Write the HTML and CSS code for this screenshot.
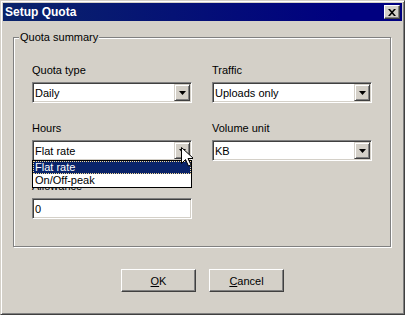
FILE: index.html
```html
<!DOCTYPE html>
<html lang="en">

<head>
    <meta charset="UTF-8">
    <title>Setup Quota</title>
    <link rel="stylesheet" href="styles.css">
</head>

<body>

    <div class="window">
        <div class="titlebar">
            <span class="title">Setup Quota</span>
            <span class="close-btn">
                <svg width="8" height="7" viewBox="0 0 8 7">
                    <path d="M0 0h2l2 2.3 2-2.3h2l-3 3.5 3 3.5h-2l-2-2.3-2 2.3h-2l3-3.5z" fill="#000"/>
                </svg>
            </span>
        </div>

        <div class="dialog-body">
            <div class="groupbox">
                <span class="group-label">Quota summary</span>

                <div class="field-grid">
                    <div class="field">
                        <label>Quota type</label>
                        <div class="combo">
                            <span class="combo-text">Daily</span>
                            <span class="combo-btn"><svg width="7" height="4" viewBox="0 0 7 4"><path d="M0 0h7l-3.5 4z" fill="#000"/></svg></span>
                        </div>
                    </div>

                    <div class="field">
                        <label>Traffic</label>
                        <div class="combo">
                            <span class="combo-text">Uploads only</span>
                            <span class="combo-btn"><svg width="7" height="4" viewBox="0 0 7 4"><path d="M0 0h7l-3.5 4z" fill="#000"/></svg></span>
                        </div>
                    </div>

                    <div class="field">
                        <label>Hours</label>
                        <div class="combo">
                            <span class="combo-text">Flat rate</span>
                            <span class="combo-btn"><svg width="7" height="4" viewBox="0 0 7 4"><path d="M0 0h7l-3.5 4z" fill="#000"/></svg></span>
                            <ul class="dropdown-list">
                                <li class="selected">Flat rate</li>
                                <li>On/Off-peak</li>
                            </ul>
                        </div>
                    </div>

                    <div class="field">
                        <label>Volume unit</label>
                        <div class="combo">
                            <span class="combo-text">KB</span>
                            <span class="combo-btn"><svg width="7" height="4" viewBox="0 0 7 4"><path d="M0 0h7l-3.5 4z" fill="#000"/></svg></span>
                        </div>
                    </div>

                    <div class="field">
                        <label>Allowance</label>
                        <div class="edit">0</div>
                    </div>
                </div>
            </div>

            <div class="buttons">
                <button type="button"><u>O</u>K</button>
                <button type="button"><u>C</u>ancel</button>
            </div>
        </div>

        <svg class="cursor" width="12" height="20" viewBox="0 0 12 20">
            <path d="M0.5 0.5v16l4-4 3 6.5 2.5-1-3-6.5h5.5z" fill="#fff" stroke="#000" stroke-width="1"/>
        </svg>
    </div>

</body>
</html>
```

FILE: styles.css
```css
body {
    margin: 0;
    font-family: 'Liberation Sans', Arial, sans-serif;
    font-size: 11px;
    color: #000;
    background-color: #d4d0c8;
}

.window {
    position: relative;
    width: 405px;
    height: 315px;
    box-sizing: border-box;
    padding: 2px;
    background-color: #d4d0c8;
    border: 1px solid;
    border-color: #d4d0c8 #404040 #404040 #d4d0c8;
    box-shadow: inset 1px 1px 0 #fff, inset -1px -1px 0 #808080;
}

.titlebar {
    height: 18px;
    display: flex;
    align-items: center;
    justify-content: space-between;
    padding-left: 2px;
    background: linear-gradient(to right, #0a246a, #000080 85%);
}

.title {
    color: #fff;
    font-weight: bold;
    font-size: 12px;
}

.close-btn {
    width: 16px;
    height: 14px;
    box-sizing: border-box;
    margin-right: 2px;
    display: flex;
    align-items: center;
    justify-content: center;
    background-color: #d4d0c8;
    border: 1px solid;
    border-color: #fff #404040 #404040 #fff;
    box-shadow: inset -1px -1px 0 #808080;
}

.dialog-body {
    padding: 16px 11px 0 10px;
}

.groupbox {
    position: relative;
    height: 210px;
    box-sizing: border-box;
    border: 1px solid #808080;
    box-shadow: inset 1px 1px 0 #fff, 1px 1px 0 #fff;
}

.group-label {
    position: absolute;
    top: -7px;
    left: 5px;
    padding: 0 1px;
    line-height: 13px;
    background-color: #d4d0c8;
}

.field-grid {
    display: grid;
    grid-template-columns: 160px 160px;
    column-gap: 20px;
    row-gap: 19px;
    padding: 26px 0 0 18px;
}

.field label {
    display: block;
    height: 13px;
    line-height: 13px;
    margin-bottom: 5px;
}

.combo,
.edit {
    position: relative;
    height: 21px;
    box-sizing: border-box;
    padding: 1px;
    display: flex;
    align-items: center;
    background-color: #fff;
    border: 1px solid;
    border-color: #808080 #fff #fff #808080;
    box-shadow: inset 1px 1px 0 #404040, inset -1px -1px 0 #d4d0c8;
}

.combo-text {
    flex: 1;
    padding-left: 1px;
}

.edit {
    padding-left: 2px;
}

.combo-btn {
    width: 16px;
    height: 17px;
    box-sizing: border-box;
    display: flex;
    align-items: center;
    justify-content: center;
    background-color: #d4d0c8;
    border: 1px solid;
    border-color: #d4d0c8 #404040 #404040 #d4d0c8;
    box-shadow: inset 1px 1px 0 #fff, inset -1px -1px 0 #808080;
}

.dropdown-list {
    position: absolute;
    top: 100%;
    left: -1px;
    width: 160px;
    box-sizing: border-box;
    margin: 0;
    padding: 0;
    list-style: none;
    background-color: #fff;
    border: 1px solid #000;
    z-index: 2;
}

.dropdown-list li {
    height: 13px;
    line-height: 13px;
    padding-left: 2px;
    box-sizing: border-box;
}

.dropdown-list li.selected {
    background-color: #0a246a;
    color: #fff;
    outline: 1px dotted #f5db95;
    outline-offset: -1px;
}

.buttons {
    display: flex;
    justify-content: center;
    gap: 13px;
    margin-top: 22px;
    padding-left: 1px;
}

.buttons button {
    width: 75px;
    height: 23px;
    padding: 0;
    font-family: inherit;
    font-size: 11px;
    color: #000;
    background-color: #d4d0c8;
    border: 1px solid;
    border-color: #fff #404040 #404040 #fff;
    box-shadow: inset -1px -1px 0 #808080;
    border-radius: 0;
}

.cursor {
    position: absolute;
    left: 180px;
    top: 146px;
    z-index: 3;
}
```
